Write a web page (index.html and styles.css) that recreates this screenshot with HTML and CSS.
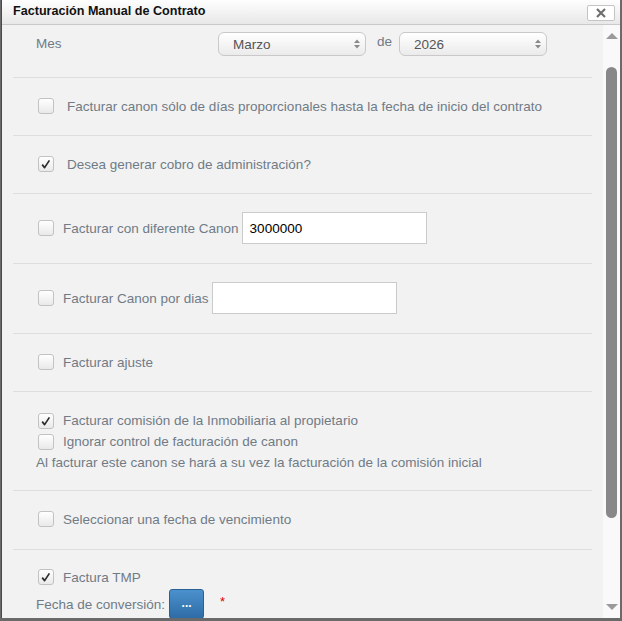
FILE: index.html
```html
<!DOCTYPE html>
<html lang="es">
<head>
<meta charset="utf-8">
<title>Facturación Manual de Contrato</title>
<link rel="stylesheet" href="styles.css">
</head>
<body>
<div class="dialog">
  <div class="titlebar">
    <span class="title">Facturación Manual de Contrato</span>
    <span class="close"><svg width="10" height="10" viewBox="0 0 10 10"><path d="M1 1 L9 9 M9 1 L1 9" stroke="#6f6f6f" stroke-width="2.2" fill="none"/></svg></span>
  </div>
  <div class="body">
    <div class="content">
      <div class="row row-first">
        <span class="lbl-mes">Mes</span>
        <div class="select"><span>Marzo</span><svg width="6" height="10" viewBox="0 0 6 10"><path d="M0 4 L3 0.5 L6 4Z M0 6 L3 9.5 L6 6Z" fill="#8a8a8a"/></svg></div>
        <span class="de">de</span>
        <div class="select"><span>2026</span><svg width="6" height="10" viewBox="0 0 6 10"><path d="M0 4 L3 0.5 L6 4Z M0 6 L3 9.5 L6 6Z" fill="#8a8a8a"/></svg></div>
      </div>
      <div class="row">
        <div class="chk-line"><span class="cb wide"></span><span>Facturar canon sólo de días proporcionales hasta la fecha de inicio del contrato</span></div>
      </div>
      <div class="row">
        <div class="chk-line"><span class="cb wide checked"><svg width="14" height="14" viewBox="0 0 14 14"><path d="M3.2 7.6 L5.6 10.6 L10.4 3.4" stroke="#2b2b2b" stroke-width="1.7" fill="none" stroke-linejoin="round"/></svg></span><span>Desea generar cobro de administración?</span></div>
      </div>
      <div class="row">
        <div class="chk-line"><span class="cb"></span><span>Facturar con diferente Canon</span><span class="txt">3000000</span></div>
      </div>
      <div class="row">
        <div class="chk-line"><span class="cb"></span><span>Facturar Canon por dias</span><span class="txt"></span></div>
      </div>
      <div class="row">
        <div class="chk-line"><span class="cb"></span><span>Facturar ajuste</span></div>
      </div>
      <div class="row row-multi">
        <div class="chk-line tall"><span class="cb checked"><svg width="14" height="14" viewBox="0 0 14 14"><path d="M3.2 7.6 L5.6 10.6 L10.4 3.4" stroke="#2b2b2b" stroke-width="1.7" fill="none" stroke-linejoin="round"/></svg></span><span>Facturar comisión de la Inmobiliaria al propietario</span></div>
        <div class="chk-line tall"><span class="cb"></span><span>Ignorar control de facturación de canon</span></div>
        <div class="note">Al facturar este canon se hará a su vez la facturación de la comisión inicial</div>
      </div>
      <div class="row row-venc">
        <div class="chk-line"><span class="cb"></span><span>Seleccionar una fecha de vencimiento</span></div>
      </div>
      <div class="row row-last">
        <div class="chk-line"><span class="cb checked"><svg width="14" height="14" viewBox="0 0 14 14"><path d="M3.2 7.6 L5.6 10.6 L10.4 3.4" stroke="#2b2b2b" stroke-width="1.7" fill="none" stroke-linejoin="round"/></svg></span><span>Factura TMP</span></div>
        <div class="conv-line"><span>Fecha de conversión:</span><span class="btn">...</span><span class="req">*</span></div>
      </div>
    </div>
    <div class="scrollbar">
      <span class="arrow-up"></span>
      <span class="thumb"></span>
      <span class="arrow-down"></span>
    </div>
  </div>
</div>
</body>
</html>
```

FILE: styles.css
```css
html, body {
  margin: 0;
  padding: 0;
}
body {
  width: 622px;
  height: 621px;
  overflow: hidden;
  background: #6a6a6a;
  font-family: "Liberation Sans", Arial, sans-serif;
  font-size: 13.5px;
}
.dialog {
  margin-left: 1px;
  width: 618px;
  height: 618px;
  border-left: 1px solid #4a4a4a;
  background: #f2f2f2;
  display: flex;
  flex-direction: column;
}
.titlebar {
  height: 24px;
  flex: none;
  border-bottom: 1px solid #c9c9c9;
  background: linear-gradient(#fefefe, #e8e8e8);
  display: flex;
  justify-content: space-between;
  align-items: flex-start;
  padding: 0 5px 0 11px;
}
.title {
  font-weight: bold;
  font-size: 12.6px;
  color: #111;
  line-height: 22px;
}
.close {
  margin-top: 5px;
  width: 28px;
  height: 16px;
  box-sizing: border-box;
  border: 1px solid #c4c4c4;
  border-radius: 2px;
  background: #fff;
  display: flex;
  align-items: center;
  justify-content: center;
}
.body {
  flex: 1;
  display: flex;
  min-height: 0;
}
.content {
  flex: 1;
  overflow: hidden;
  padding: 0 11px;
  color: #707b86;
}
.row {
  border-bottom: 1px solid #dedede;
  padding: 18px 0 19px 23px;
}
.row-first {
  padding: 7px 0 21px 23px;
  display: flex;
  align-items: center;
}
.lbl-mes {
  width: 182px;
  margin-top: -2px;
}
.select {
  width: 148px;
  height: 24px;
  box-sizing: border-box;
  border: 1px solid #c9c9c9;
  border-radius: 6px;
  background: linear-gradient(#ffffff, #ebebeb);
  display: flex;
  align-items: center;
  justify-content: space-between;
  padding: 0 5px 0 14px;
  color: #555;
}
.de {
  margin: 0 7px 6px 11px;
}
.chk-line {
  display: flex;
  align-items: center;
  min-height: 20px;
}
.chk-line.tall {
  height: 21px;
}
.cb {
  width: 16px;
  height: 16px;
  box-sizing: border-box;
  flex: none;
  margin-left: 2px;
  margin-right: 9px;
  border: 1px solid #c2c2c2;
  border-radius: 3px;
  background: linear-gradient(#ffffff, #e9e9e9);
  display: flex;
  align-items: center;
  justify-content: center;
}
.cb.wide {
  margin-right: 13px;
}
.txt {
  width: 185px;
  height: 32px;
  box-sizing: border-box;
  margin-left: 3px;
  border: 1px solid #cbcbcb;
  background: #fff;
  padding-left: 7px;
  color: #000;
  font-size: 13.5px;
  display: flex;
  align-items: center;
}
.row-multi {
  padding-bottom: 17px;
}
.note {
  line-height: 21px;
}
.row-venc {
  padding-bottom: 20px;
}
.row-last {
  padding-top: 17px;
  border-bottom: none;
}
.conv-line {
  margin-top: 2px;
  display: flex;
  align-items: center;
}
.btn {
  margin-left: 4px;
  width: 35px;
  height: 30px;
  box-sizing: border-box;
  border: 1px solid #2a6194;
  border-radius: 3px;
  background: linear-gradient(#4b91cd, #2e6ca6);
  color: #fff;
  font-weight: bold;
  font-size: 12px;
  display: flex;
  align-items: flex-end;
  justify-content: center;
  padding-bottom: 8px;
}
.req {
  margin-left: 16px;
  margin-bottom: 6px;
  color: #e00000;
  font-size: 13px;
}
.scrollbar {
  width: 17px;
  flex: none;
  background: #f9f9f9;
  display: flex;
  flex-direction: column;
  align-items: center;
}
.arrow-up {
  margin-top: 8px;
  width: 0;
  height: 0;
  border-left: 6px solid transparent;
  border-right: 6px solid transparent;
  border-bottom: 6px solid #9a9a9a;
}
.thumb {
  margin-top: 28px;
  width: 11px;
  height: 451px;
  border-radius: 6px;
  background: #888;
}
.arrow-down {
  margin-top: auto;
  margin-bottom: 8px;
  width: 0;
  height: 0;
  border-left: 6px solid transparent;
  border-right: 6px solid transparent;
  border-top: 6px solid #9a9a9a;
}
```
